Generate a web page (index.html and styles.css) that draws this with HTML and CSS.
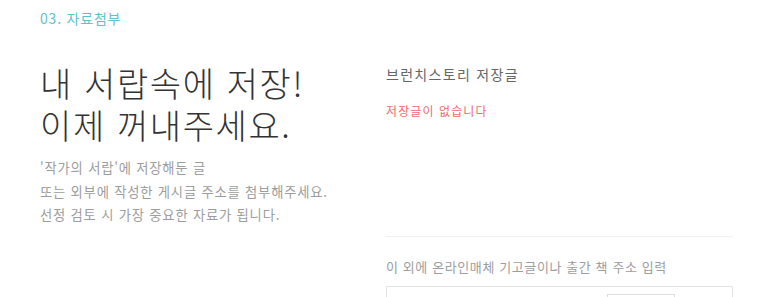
FILE: index.html
```html
<!DOCTYPE html>
<html lang="ko">
<head>
  <meta charset="UTF-8">
  <title>자료첨부</title>
  <link rel="stylesheet" href="styles.css">
</head>
<body>
  <section class="attach">
    <h3 class="step">03. 자료첨부</h3>

    <div class="columns">
      <div class="intro">
        <h1>내 서랍속에 저장!<br>이제 꺼내주세요.</h1>
        <p>'작가의 서랍'에 저장해둔 글<br>또는 외부에 작성한 게시글 주소를 첨부해주세요.<br>선정 검토 시 가장 중요한 자료가 됩니다.</p>
      </div>

      <div class="drawer">
        <h4 class="drawer-title">브런치스토리 저장글</h4>
        <p class="empty">저장글이 없습니다</p>

        <div class="external">
          <label for="extUrl">이 외에 온라인매체 기고글이나 출간 책 주소 입력</label>
          <div class="url-box">
            <input type="text" id="extUrl">
            <button class="add-btn"></button>
          </div>
        </div>
      </div>
    </div>
  </section>
</body>
</html>
```

FILE: styles.css
```css
:root {
  --teal: #5ec3c9;
  --text-color: #333333;
  --sub-text: #9d9d9d;
  --title-text: #666666;
  --danger-color: #ef6a6a;
  --line-color: #f1f1f1;
  --border-color: #e3e3e3;
}

body {
  margin: 0;
  background: #ffffff;
  font-family: 'Noto Sans CJK KR', 'Noto Sans', sans-serif;
  color: var(--text-color);
}

.attach {
  padding: 8px 40px 0 40px;
}

.step {
  margin: 0;
  font-size: 14px;
  line-height: 20px;
  font-weight: 400;
  letter-spacing: 0.8px;
  color: var(--teal);
}

.columns {
  display: grid;
  grid-template-columns: 346px 347px;
  margin-top: 34px;
}

h1 {
  margin: 0;
  font-size: 34px;
  line-height: 42px;
  font-weight: 300;
  letter-spacing: 1.6px;
  color: var(--text-color);
}

.intro p {
  margin: 10px 0 0 0;
  font-size: 13.3px;
  line-height: 23.5px;
  letter-spacing: 0.8px;
  color: var(--sub-text);
}

.drawer-title {
  margin: 2px 0 0 0;
  font-size: 14px;
  line-height: 20px;
  font-weight: 400;
  letter-spacing: 1.3px;
  color: var(--title-text);
}

.empty {
  margin: 18px 0 0 0;
  font-size: 12px;
  line-height: 18px;
  letter-spacing: 1.1px;
  color: var(--danger-color);
}

.external {
  margin-top: 116px;
  border-top: 1px solid var(--line-color);
  padding-top: 20px;
}

.external label {
  display: block;
  font-size: 13px;
  line-height: 20px;
  letter-spacing: 0.6px;
  color: var(--sub-text);
  margin-bottom: 9px;
}

.url-box {
  display: flex;
  gap: 10px;
  border: 1px solid var(--border-color);
  padding: 7px 57px 7px 10px;
}

.url-box input {
  flex: 1;
  border: none;
  outline: none;
  font-size: 13px;
  height: 28px;
}

.add-btn {
  width: 68px;
  height: 30px;
  border: 1px solid #dddddd;
  background: #ffffff;
}
```
